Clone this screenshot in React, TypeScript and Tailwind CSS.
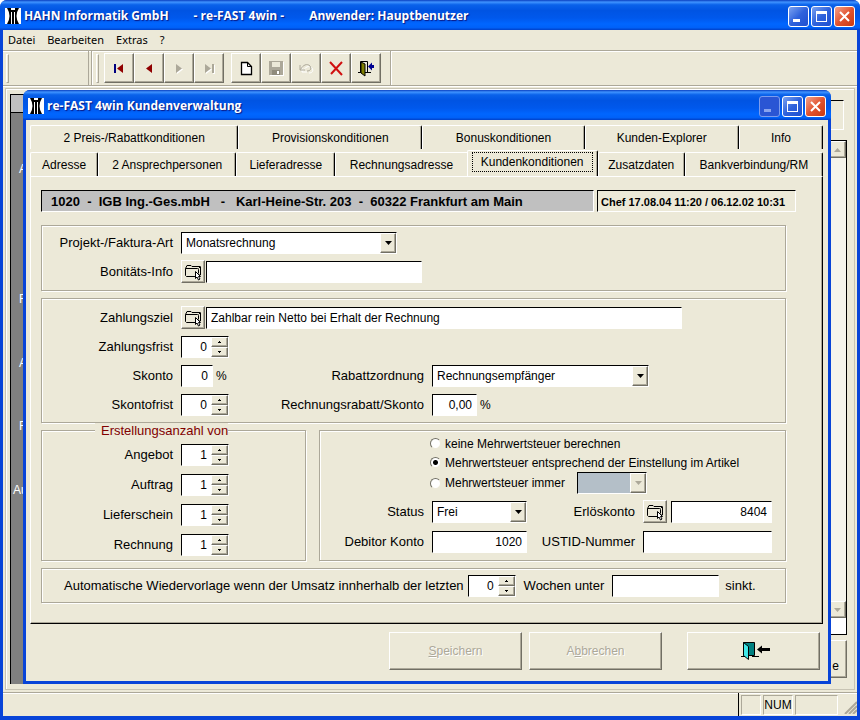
import type { ReactNode } from "react";

const raised =
  "border border-t-white border-l-white border-r-[#716f64] border-b-[#716f64] shadow-[inset_-1px_-1px_0_#aca899]";
const sunken =
  "border border-t-black border-l-black border-r-white border-b-white";
const etched =
  "border border-[#aca899] shadow-[1px_1px_0_#fff,inset_1px_1px_0_#fff]";

function Logo() {
  return (
    <svg width="16" height="16" viewBox="0 0 16 16" className="shrink-0" aria-hidden="true">
      <rect width="16" height="16" fill="#000" />
      <path d="M0 0h2Q7 8 2 16H0Z M16 0h-2Q9 8 14 16h2Z" fill="#fff" />
      <path d="M6 0h4v2H6zM6 4h1v12H6zM9 4h1v12H9z" fill="#fff" />
    </svg>
  );
}

function CaptionButtons({ inactiveMin = false }: { inactiveMin?: boolean }) {
  const blue = "size-[21px] rounded-[3px] border border-white bg-linear-to-br from-[#7da2f0] via-[#2f62dc] to-[#1f4fd0]";
  return (
    <div className="flex shrink-0 gap-0.5">
      <button
        aria-label="Minimieren"
        className={inactiveMin ? "size-[21px] rounded-[3px] border border-[#7c9cee] bg-[#2a55d4]" : blue}
      >
        <svg width="19" height="19" viewBox="0 0 19 19">
          <path d="M4 12h7v3H4z" fill={inactiveMin ? "#8aa4ee" : "#fff"} />
        </svg>
      </button>
      <button aria-label="Maximieren" className={blue}>
        <svg width="19" height="19" viewBox="0 0 19 19">
          <path d="M4 4h11v11H4zM5 7v7h9V7z" fill="#fff" fillRule="evenodd" />
        </svg>
      </button>
      <button
        aria-label="Schließen"
        className="size-[21px] rounded-[3px] border border-white bg-linear-to-br from-[#f0a08a] via-[#e2532f] to-[#c8390f]"
      >
        <svg width="19" height="19" viewBox="0 0 19 19">
          <path d="M5 5l9 9M14 5l-9 9" stroke="#fff" strokeWidth="2" />
        </svg>
      </button>
    </div>
  );
}

function TitleBar({ children, inactiveMin }: { children: ReactNode; inactiveMin?: boolean }) {
  return (
    <header className="flex h-[30px] shrink-0 items-center gap-[3px] rounded-t-[7px] bg-[linear-gradient(180deg,#0a3fc0_0%,#3f93ff_7%,#0a62ea_16%,#0054e3_35%,#0058ec_60%,#0066ff_80%,#0061f8_92%,#0040c8_100%)] pt-0.5 pr-[5px] pl-[5px] font-['Open_Sans',sans-serif] text-[12px] leading-4 font-bold text-white [text-shadow:1px_1px_1px_#0a1883]">
      <Logo />
      {children}
      <CaptionButtons inactiveMin={inactiveMin} />
    </header>
  );
}

function MenuBar() {
  return (
    <nav className="flex h-5 shrink-0 items-center gap-3 px-[5px] font-['Noto_Sans',sans-serif] text-[11px]">
      {["Datei", "Bearbeiten", "Extras", "?"].map((item) => (
        <button key={item}>{item}</button>
      ))}
    </nav>
  );
}

function ToolButton({ label, disabled, children }: { label: string; disabled?: boolean; children: ReactNode }) {
  return (
    <button
      aria-label={label}
      disabled={disabled}
      className={`flex h-[30px] w-[30px] items-center justify-center ${raised}`}
    >
      <svg width="18" height="18" viewBox="0 0 18 18" fill="none">
        {children}
      </svg>
    </button>
  );
}

function Gripper() {
  return <div className="h-[29px] w-[3px] border border-t-white border-l-white border-r-[#aca899] border-b-[#aca899]" />;
}

function ToolBar() {
  return (
    <div className="flex h-9 shrink-0 gap-0.5 border-y border-[#aca899] pl-0.5 shadow-[0_1px_0_#fff,inset_0_1px_0_#fff]">
      <div className="flex w-[84px] items-center border-r border-[#aca899] pl-px">
        <Gripper />
      </div>
      <div className="flex items-center border-x border-r-[#aca899] border-l-[#aca899] pr-[9px] pl-1 shadow-[inset_1px_0_0_#fff,1px_0_0_#fff]">
        <Gripper />
        <div className="flex pl-[5px]">
          <ToolButton label="Erster Datensatz">
            <path d="M4 5h2v9H4z" fill="#000080" />
            <path d="M13 5v9L7 9.500z" fill="#900000" />
          </ToolButton>
          <ToolButton label="Vorheriger Datensatz">
            <path d="M12 5v9L6 9.500z" fill="#900000" />
          </ToolButton>
          <ToolButton label="Nächster Datensatz" disabled>
            <path d="M7 6v9l6-4.500z" fill="#fff" />
            <path d="M6 5v9l6-4.500z" fill="#aca899" />
          </ToolButton>
          <ToolButton label="Letzter Datensatz" disabled>
            <path d="M6 6v9l6-4.500zM13 6h2v9h-2z" fill="#fff" />
            <path d="M5 5v9l6-4.500zM12 5h2v9h-2z" fill="#aca899" />
          </ToolButton>
        </div>
        <div className="flex pl-[7px]">
          <ToolButton label="Neu">
            <path d="M4.500 3.500h6l4 4v8h-10z" fill="#fff" stroke="#000" strokeWidth="1.300" />
            <path d="M10.500 3.500v4h4" stroke="#000" />
          </ToolButton>
          <ToolButton label="Speichern" disabled>
            <path d="M3 3h14v14H3z" fill="#fff" />
            <path d="M2 2h14v14H2z" fill="#aca899" />
            <path d="M5 3h8v5H5z" fill="#ece9d8" />
            <path d="M5 11h8v5H5z" fill="#8f8b7c" />
            <path d="M10 12h2v3h-2z" fill="#fff" />
          </ToolButton>
          <ToolButton label="Rückgängig" disabled>
            <path d="M4 7v5h5M4.500 11.500C7 7 11 5 14 8c2 3 0 5-3 5" stroke="#fff" transform="translate(1 1)" />
            <path d="M3 6v5h5M3.500 10.500C6 6 10 4 13 7c2 3 0 5-3 5" stroke="#aca899" />
          </ToolButton>
          <ToolButton label="Löschen">
            <path d="M3 3l12 13M15 3L4 15" stroke="#d01010" strokeWidth="2" />
          </ToolButton>
          <ToolButton label="Beenden">
            <path d="M3.500 13.500v-11h7v11M1 13.500h3M8 13.500h6" stroke="#000" />
            <path d="M4 3l4 2v12l-4-3z" fill="#808000" stroke="#000" />
            <path d="M11 7.500l4-4v2.500h2v3h-2v2.500z" fill="#000090" />
          </ToolButton>
        </div>
      </div>
    </div>
  );
}

function ScrollArrow({ up = false }: { up?: boolean }) {
  return (
    <button
      aria-label={up ? "Nach oben" : "Nach unten"}
      className={`flex h-[17px] items-center justify-end bg-[#ece9d8] pr-1 ${raised}`}
    >
      <svg width="7" height="4" viewBox="0 0 7 4">
        <path d={up ? "M0 4L3.500 0L7 4z" : "M0 0h7L3.500 4z"} fill="#aca899" />
      </svg>
    </button>
  );
}

// Address form lying under the dialog
function AddressForm() {
  return (
    <div className="flex grow justify-between border border-[#c8c4b4] pt-[5px] pr-[7px] pb-[5px] pl-1 shadow-[inset_1px_1px_0_#fff]">
      <div className="flex w-[120px] flex-col border-t border-l border-black bg-[#808080] text-[12px] leading-4 text-white">
        <div className="h-[18px] shrink-0 border-b border-black bg-[#c0c0c0]" />
        <div className="flex grow flex-col justify-between px-2 pt-12 pb-[186px]">
          <span>A</span>
          <span className="pt-[66px]">F</span>
          <span>A</span>
          <span>F</span>
          <span className="-ml-1.5">Au</span>
        </div>
      </div>
      <div className="flex w-12 flex-col pt-1.5">
        <div className="mr-[3px] h-[30px] border-t border-r border-b border-t-black border-r-white border-b-white" />
        <div className="mt-[10px] flex grow flex-col border-t border-r border-black bg-[#f5f4ec]">
          <ScrollArrow up />
          <div className="grow" />
          <ScrollArrow />
          <div className="h-[17px] border-b border-black bg-white" />
        </div>
        <button className={`mt-[5px] mb-1.5 flex h-[38px] shrink-0 items-end justify-end pr-[7px] pb-0.5 text-[12px] ${raised}`}>e</button>
      </div>
    </div>
  );
}

function StatusBar() {
  const cell = "h-5 border border-t-[#aca899] border-l-[#aca899] border-r-white border-b-white";
  return (
    <footer className="flex h-6 shrink-0 items-center justify-end gap-0.5 border-t border-[#aca899] text-[12px] shadow-[inset_0_1px_0_#fff]">
      <div className="h-full w-px bg-black" />
      <div className={`w-5 ${cell}`} />
      <div className={`w-[30px] text-center leading-[18px] ${cell}`}>NUM</div>
      <div className={`w-[43px] ${cell}`} />
      <svg width="17" height="18" viewBox="0 0 17 18" aria-hidden="true">
        <path d="M5 18L17 6M9 18L17 10M13 18L17 14" stroke="#aca899" strokeWidth="2" />
      </svg>
    </footer>
  );
}

const tabEdge =
  "border-t border-r border-l border-t-white border-r-black border-l-white shadow-[inset_-1px_0_0_#aca899]";

function Tab({ size, children }: { size: string; children: ReactNode }) {
  return (
    <button role="tab" aria-selected="false" className={`h-6 grow whitespace-nowrap rounded-t-[2px] ${tabEdge} ${size}`}>
      {children}
    </button>
  );
}

function Tabs() {
  return (
    <div role="tablist" className="text-[12px]">
      <div className="flex">
        <Tab size="basis-[208px]">2 Preis-/Rabattkonditionen</Tab>
        <Tab size="basis-[184px]">Provisionskonditionen</Tab>
        <Tab size="basis-[162px]">Bonuskonditionen</Tab>
        <Tab size="basis-[154px]">Kunden-Explorer</Tab>
        <Tab size="basis-[84px]">Info</Tab>
      </div>
      <div className="flex items-end pt-px">
        <Tab size="basis-[68px]">Adresse</Tab>
        <Tab size="basis-[138px]">2 Ansprechpersonen</Tab>
        <Tab size="basis-[99px]">Lieferadresse</Tab>
        <button role="tab" aria-selected="false" className="h-6 grow basis-[131px] border-t border-l border-white">
          Rechnungsadresse
        </button>
        <button
          role="tab"
          aria-selected="true"
          className={`h-[26px] grow basis-[131px] rounded-t-[2px] px-1 pb-1 ${tabEdge}`}
        >
          <span className="block border border-dotted border-black leading-[18px]">Kundenkonditionen</span>
        </button>
        <Tab size="basis-[87px]">Zusatzdaten</Tab>
        <Tab size="basis-[138px]">Bankverbindung/RM</Tab>
      </div>
    </div>
  );
}

function TextField({ id, value = "", width, right, label }: { id: string; value?: string; width: string; right?: boolean; label?: string }) {
  return (
    <input
      id={id}
      aria-label={label}
      defaultValue={value}
      className={`h-[22px] min-w-0 bg-white px-1 text-[12px] outline-none ${sunken} ${right ? "text-right" : ""} ${width}`}
    />
  );
}

function ComboBox({ id, value, width, disabled, label }: { id: string; value: string; width: string; disabled?: boolean; label?: string }) {
  return (
    <div className={`relative ${width}`}>
      <select
        id={id}
        aria-label={label}
        disabled={disabled}
        className={`block h-[22px] w-full appearance-none px-1 text-[12px] outline-none ${sunken} ${disabled ? "bg-[#b4bfc8] opacity-100" : "bg-white"}`}
      >
        <option>{value}</option>
      </select>
      <span className={`pointer-events-none absolute top-px right-px bottom-px flex w-4 items-center justify-center bg-[#ece9d8] ${raised}`}>
        <svg width="7" height="4" viewBox="0 0 7 4">
          <path d="M0 0h7L3.500 4z" fill={disabled ? "#aca899" : "#000"} />
        </svg>
      </span>
    </div>
  );
}

function Spinner({ id, value, label }: { id: string; value: string; label?: string }) {
  const arrow = `flex grow items-center justify-center bg-[#ece9d8] ${raised}`;
  return (
    <div className={`flex h-[22px] w-12 shrink-0 bg-white ${sunken}`}>
      <input id={id} aria-label={label} defaultValue={value} className="w-[29px] pr-1 text-right text-[12px] outline-none" />
      <div className="flex grow flex-col">
        <button aria-label="Erhöhen" className={arrow}>
          <svg width="3" height="2" viewBox="0 0 3 2"><path d="M1 0h1v1h1v1H0V1h1z" fill="#000" /></svg>
        </button>
        <button aria-label="Verringern" className={arrow}>
          <svg width="3" height="2" viewBox="0 0 3 2"><path d="M0 0h3v1H2v1H1V1H0z" fill="#000" /></svg>
        </button>
      </div>
    </div>
  );
}

function LookupButton({ label }: { label: string }) {
  return (
    <button aria-label={label} className={`flex h-[23px] w-6 shrink-0 items-center justify-center ${raised}`}>
      <svg width="18" height="18" viewBox="0 0 18 18" fill="none" stroke="#000">
        <path d="M11 13.500H2.500l-1-1v-7l1.500-3h4l1 1h8l.500.500v8h-1.500" />
        <path d="M1.500 5.500h12l1 1v4M14.500 5.500l2-2" />
        <path d="M11.500 8.500v7l1.500-1.500 1.500 3 1.500-1-1.500-2.500h2z" fill="#fff" />
      </svg>
    </button>
  );
}

function Label({ htmlFor, children }: { htmlFor: string; children: ReactNode }) {
  return (
    <label htmlFor={htmlFor} className="text-right whitespace-nowrap">
      {children}
    </label>
  );
}

function RecordHeader() {
  return (
    <div className="flex gap-[3px] font-bold whitespace-pre">
      <div className={`h-[22px] grow bg-[#c0c0c0] pl-[9px] text-[13px] leading-[22px] ${sunken}`}>
        {"1020  -  IGB Ing.-Ges.mbH   -   Karl-Heine-Str. 203  -  60322 Frankfurt am Main"}
      </div>
      <div className={`h-[22px] w-[199px] pl-[3px] text-[11px] leading-[22px] ${sunken}`}>
        Chef 17.08.04 11:20 / 06.12.02 10:31
      </div>
    </div>
  );
}

function ProjectGroup() {
  return (
    <section className={`grid grid-cols-[131px_1fr] items-center gap-x-2 gap-y-1.5 pt-1.5 pb-[7px] ${etched}`}>
      <Label htmlFor="art">Projekt-/Faktura-Art</Label>
      <ComboBox id="art" value="Monatsrechnung" width="w-[216px]" />
      <Label htmlFor="bonitaet">Bonitäts-Info</Label>
      <div className="flex items-center gap-px">
        <LookupButton label="Bonitäts-Info auswählen" />
        <TextField id="bonitaet" width="w-[216px]" />
      </div>
    </section>
  );
}

function PaymentGroup() {
  return (
    <section className={`grid grid-cols-[131px_72px_163px_1fr] items-center gap-x-2 gap-y-[7px] pt-[7px] pb-1.5 ${etched}`}>
      <Label htmlFor="ziel">Zahlungsziel</Label>
      <div className="col-span-3 mr-[103px] flex items-center gap-px">
        <LookupButton label="Zahlungsziel auswählen" />
        <TextField id="ziel" value="Zahlbar rein Netto bei Erhalt der Rechnung" width="grow" />
      </div>
      <Label htmlFor="frist">Zahlungsfrist</Label>
      <div className="col-span-3">
        <Spinner id="frist" value="0" />
      </div>
      <Label htmlFor="skonto">Skonto</Label>
      <div className="flex items-center gap-[3px] text-[12px]">
        <TextField id="skonto" value="0" width="w-8" right />%
      </div>
      <Label htmlFor="ordnung">Rabattzordnung</Label>
      <ComboBox id="ordnung" value="Rechnungsempfänger" width="w-[217px]" />
      <Label htmlFor="skontofrist">Skontofrist</Label>
      <Spinner id="skontofrist" value="0" />
      <Label htmlFor="rabatt">Rechnungsrabatt/Skonto</Label>
      <div className="flex items-center gap-[3px] text-[12px]">
        <TextField id="rabatt" value="0,00" width="w-[45px]" right />%
      </div>
    </section>
  );
}

function CountGroup() {
  return (
    <fieldset className={`relative grid w-[265px] shrink-0 grid-cols-[131px_1fr] content-start items-center gap-2 pt-[13px] ${etched}`}>
      <legend className="absolute -top-2 left-[53px] bg-[#ece9d8] pl-1.5 leading-4 text-[#800000]">Erstellungsanzahl von</legend>
      <Label htmlFor="angebot">Angebot</Label>
      <Spinner id="angebot" value="1" />
      <Label htmlFor="auftrag">Auftrag</Label>
      <Spinner id="auftrag" value="1" />
      <Label htmlFor="lieferschein">Lieferschein</Label>
      <Spinner id="lieferschein" value="1" />
      <Label htmlFor="rechnung">Rechnung</Label>
      <Spinner id="rechnung" value="1" />
    </fieldset>
  );
}

function Radio({ children, checked }: { children: ReactNode; checked?: boolean }) {
  return (
    <label className="flex h-[19px] items-center gap-1 text-[12px]">
      <input
        type="radio"
        name="mwst"
        defaultChecked={checked}
        className="size-[11px] appearance-none rounded-full border border-t-[#716f64] border-l-[#716f64] border-r-[#ece9d8] border-b-[#ece9d8] bg-white checked:bg-[radial-gradient(circle,#000_2px,#fff_3px)]"
      />
      {children}
    </label>
  );
}

function TaxGroup() {
  return (
    <section className={`grow pt-[3px] pr-[13px] pb-[7px] ${etched}`}>
      <div className="pl-[110px]">
        <Radio>keine Mehrwertsteuer berechnen</Radio>
        <Radio checked>Mehrwertsteuer entsprechend der Einstellung im Artikel</Radio>
        <div className="flex h-[22px] items-center gap-3">
          <Radio>Mehrwertsteuer immer</Radio>
          <ComboBox id="satz" label="Steuersatz" value="" width="w-[70px]" disabled />
        </div>
      </div>
      <div className="grid grid-cols-[104px_95px_1fr_129px] items-center gap-2 pt-1.5">
        <Label htmlFor="status">Status</Label>
        <ComboBox id="status" value="Frei" width="w-full" />
        <Label htmlFor="erloes">Erlöskonto</Label>
        <div className="flex items-center gap-1">
          <LookupButton label="Erlöskonto auswählen" />
          <TextField id="erloes" value="8404" width="grow" right />
        </div>
        <Label htmlFor="debitor">Debitor Konto</Label>
        <TextField id="debitor" value="1020" width="w-full" right />
        <Label htmlFor="ustid">USTID-Nummer</Label>
        <TextField id="ustid" width="w-full" />
      </div>
    </section>
  );
}

function ReminderGroup() {
  return (
    <section className={`flex h-[35px] items-center gap-1 pl-[22px] whitespace-nowrap ${etched}`}>
      <label htmlFor="wochen">Automatische Wiedervorlage wenn der Umsatz innherhalb der letzten</label>
      <Spinner id="wochen" value="0" />
      <label htmlFor="umsatz" className="px-1">Wochen unter</label>
      <TextField id="umsatz" width="w-[107px]" />
      <span className="pl-0.5">sinkt.</span>
    </section>
  );
}

function CustomerDialog() {
  const action = `h-[38px] w-[133px] ${raised}`;
  return (
    <div className="absolute top-1 right-[26px] bottom-2 left-5 flex flex-col rounded-t-[7px] bg-[#0844d8]">
      <TitleBar inactiveMin>
        <h2 className="grow">re-FAST 4win Kundenverwaltung</h2>
      </TitleBar>
      <div className="mx-[3px] mb-[3px] flex grow flex-col bg-[#ece9d8] pt-[5px] pr-[5px] pl-1">
        <Tabs />
        <div className="flex flex-col gap-[7px] border border-t-white border-r-black border-b-black border-l-white pt-[13px] pr-9 pb-5 pl-2.5 text-[13px] leading-4 shadow-[inset_-1px_-1px_0_#aca899]">
          <div className="-mr-2.5 pb-1.5">
            <RecordHeader />
          </div>
          <ProjectGroup />
          <PaymentGroup />
          <div className="flex gap-[13px]">
            <CountGroup />
            <TaxGroup />
          </div>
          <ReminderGroup />
        </div>
        <div className="flex justify-end gap-[7px] pt-2 pr-[3px] text-[12px]">
          <button disabled className={`text-[#aca899] [text-shadow:1px_1px_0_#fff] ${action}`}>
            <u>S</u>peichern
          </button>
          <button disabled className={`text-[#aca899] [text-shadow:1px_1px_0_#fff] ${action}`}>
            A<u>b</u>brechen
          </button>
          <button aria-label="Schließen" className={`ml-[18px] flex items-center justify-center ${action}`}>
            <svg width="32" height="20" viewBox="0 0 32 20">
              <path d="M5.500 1.500h11v13h-11z" fill="#008080" stroke="#000" />
              <path d="M5.500 1.500l5 4v13l-5-4z" fill="#40e8e8" stroke="#000" />
              <path d="M3 15.500h4M14 15.500h7" stroke="#000" />
              <path d="M19 8.500l5-4v2.500h8v3h-8v2.500z" fill="#000" />
            </svg>
          </button>
        </div>
      </div>
    </div>
  );
}

export default function App() {
  return (
    <div className="flex min-h-screen flex-col rounded-t-[7px] bg-[#0844d8] font-['Liberation_Sans',Arial,sans-serif] text-black">
      <TitleBar>
        <h1 className="flex grow gap-[25px] whitespace-pre">
          <span>HAHN Informatik GmbH</span>
          <span>- re-FAST 4win -</span>
          <span>Anwender: Hauptbenutzer</span>
        </h1>
      </TitleBar>
      <div className="mx-[3px] mb-1 flex grow flex-col bg-[#ece9d8]">
        <MenuBar />
        <ToolBar />
        <main className="relative flex grow flex-col p-0.5">
          <AddressForm />
          <CustomerDialog />
        </main>
        <StatusBar />
      </div>
    </div>
  );
}
